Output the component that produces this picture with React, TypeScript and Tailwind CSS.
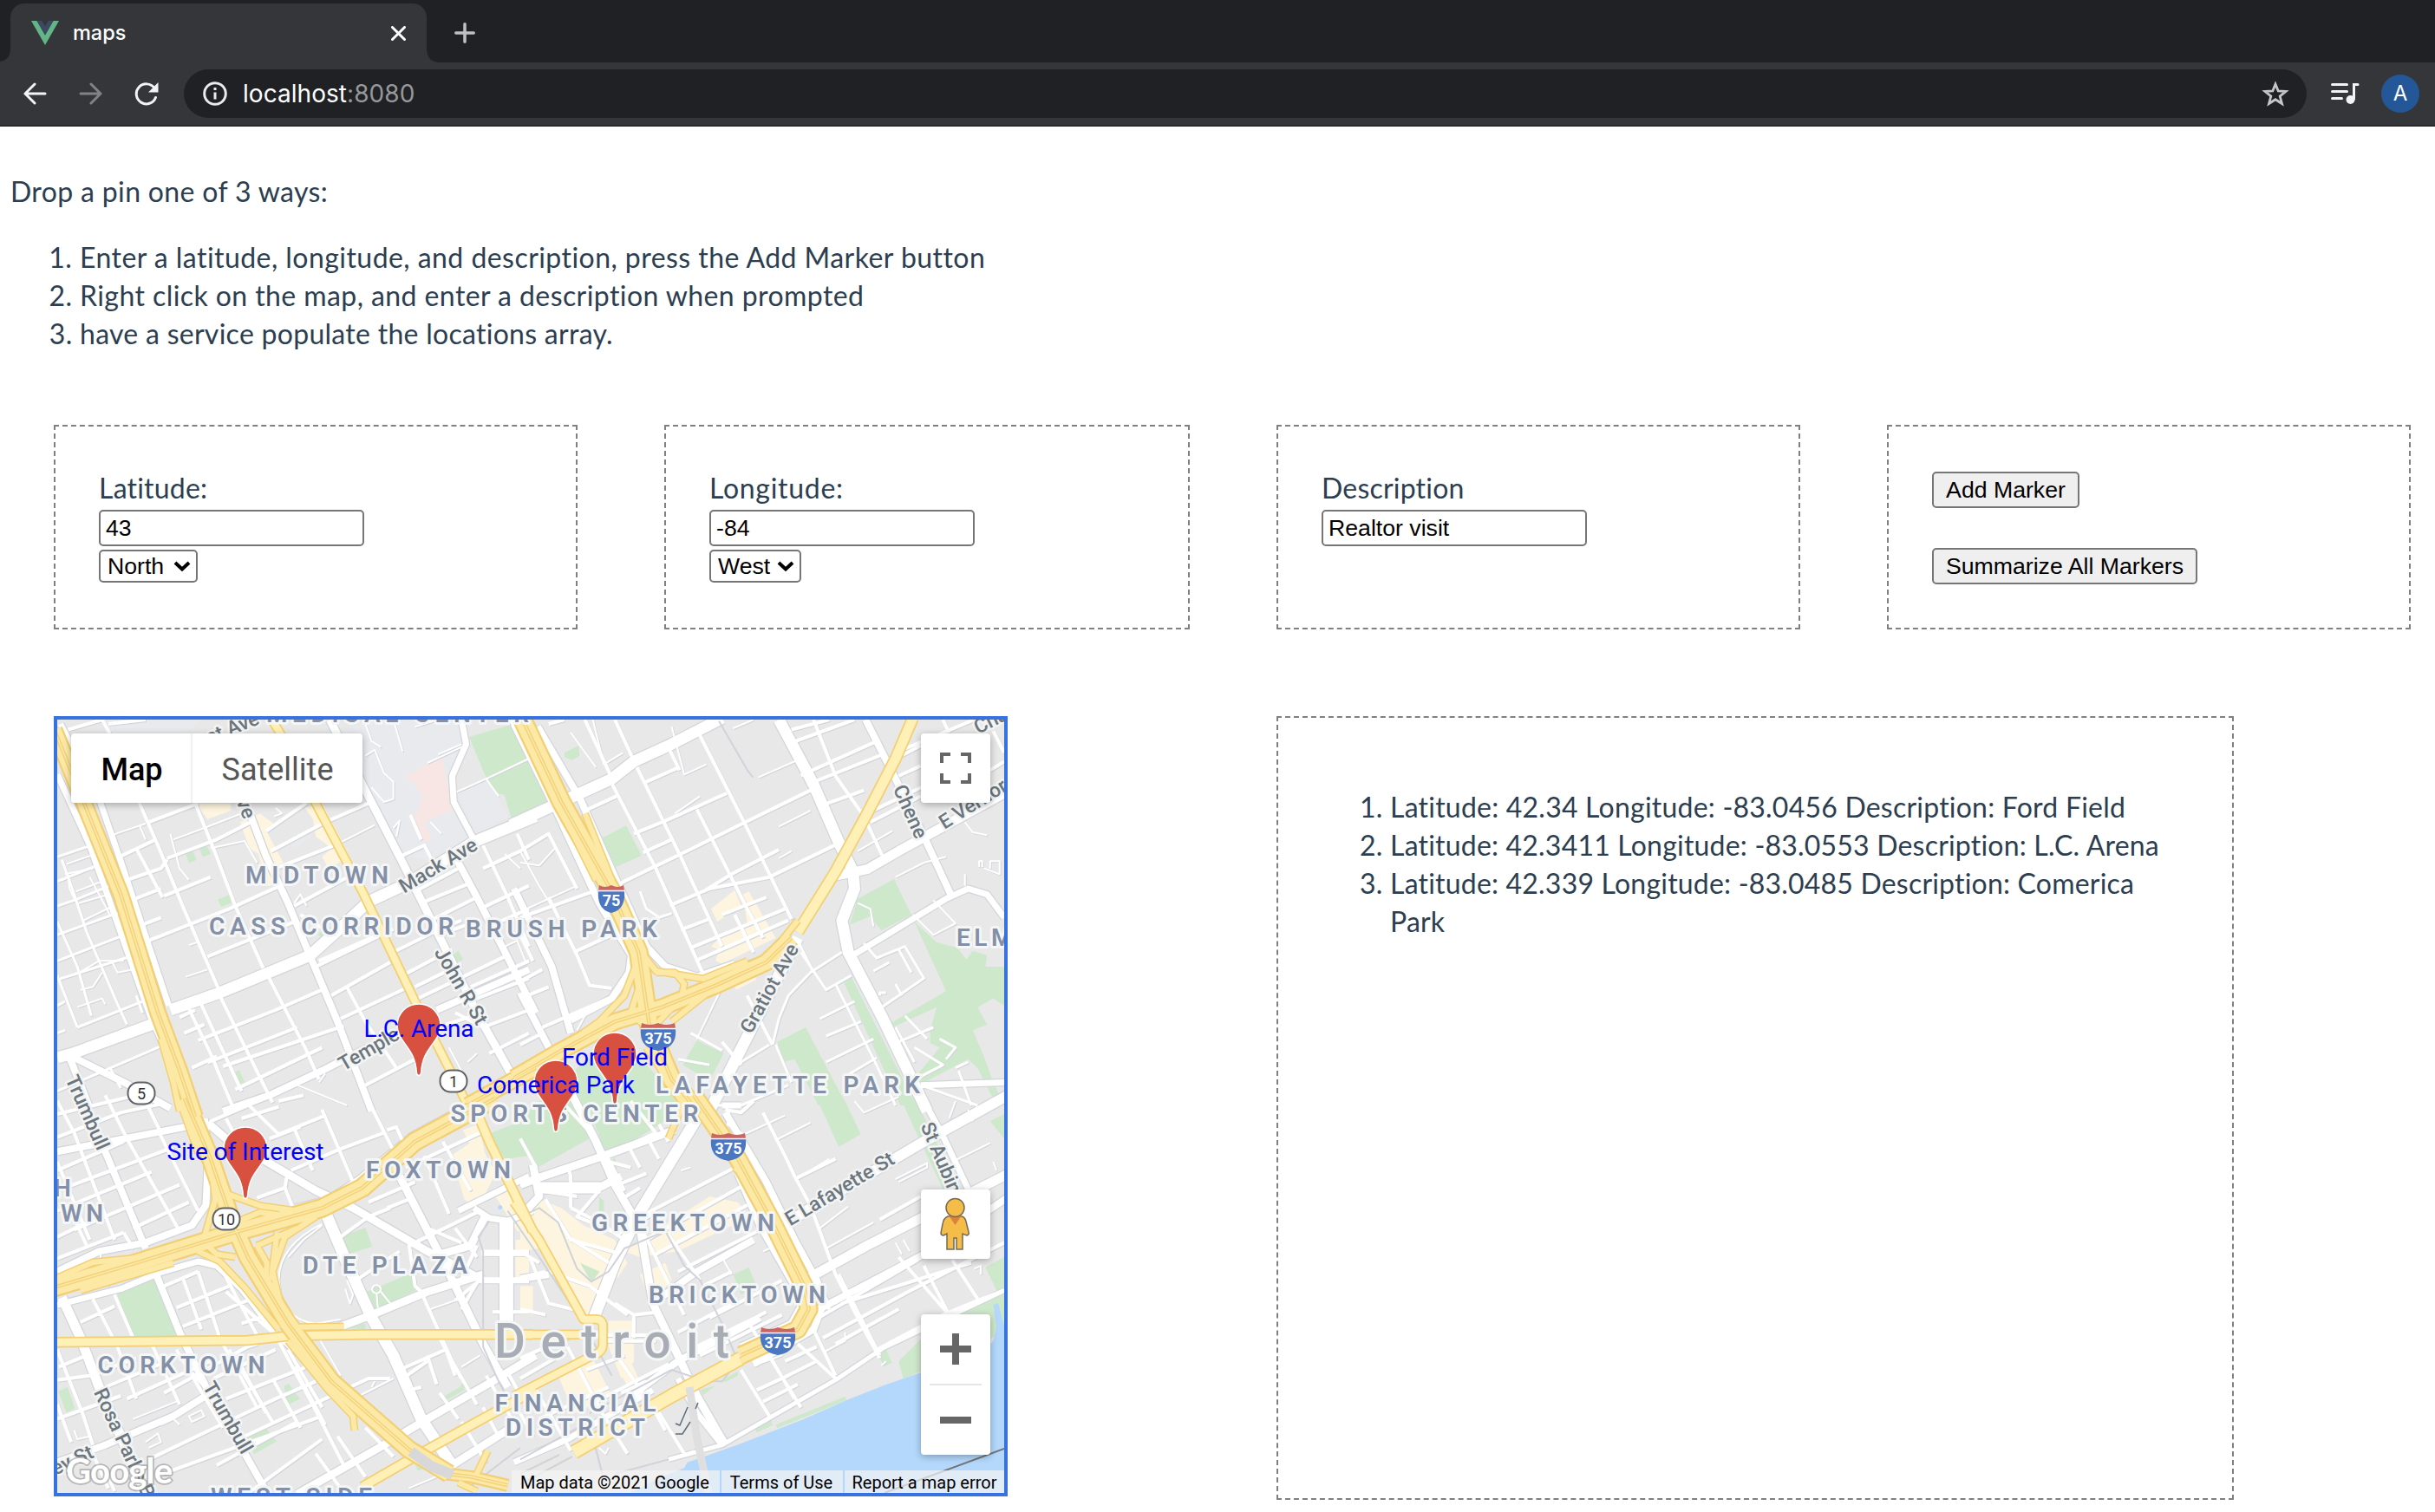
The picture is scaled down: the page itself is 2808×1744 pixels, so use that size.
import React from "react";

type Quad = "tl" | "tr" | "bl" | "br";
type Line = [Quad, number, string];
type Shape = [Quad, string];

const QUAD: Record<Quad, string> = {
  tl: "matrix(0.357143 0 0 0.333333 50 815)",
  tr: "matrix(0.363636 0 0 0.333333 600 815)",
  bl: "matrix(0.357143 0 0 0.333333 50 1270)",
  br: "matrix(0.363636 0 0 0.333333 600 1270)",
};

/* ---------- land use ---------- */
const CAMPUS: Shape[] = [
  ["tl", "M190 45H510L480 80L300 120L200 100Z"],
  ["tl", "M940 100L1060 45H1350L1370 130L1325 240L1330 340L1390 450L1240 530L1150 510L1040 280Z"],
  ["tl", "M1335 300L1440 250L1500 380L1400 440Z"],
  ["tl", "M790 465L855 420L870 445L805 495Z"],
  ["tl", "M960 520L1080 580L1070 650L1030 640Z"],
];
const PINK: Shape[] = [
  ["tl", "M1168 240L1285 178L1325 355L1232 400L1210 350L1225 310L1200 270Z"],
  ["tl", "M1190 380L1218 360L1254 460L1228 470Z"],
];
const RETAIL: Shape[] = [
  ["tl", "M495 335H605V360L530 390Z"],
  ["tl", "M635 400L700 370L750 410L720 430L775 540L740 560L735 620L720 620L695 510L665 490Z"],
  ["tl", "M845 350L900 335L990 520L920 560L900 520L930 490L880 450L870 390Z"],
  ["tr", "M605 700L680 635L700 690L625 745Z"],
  ["tr", "M705 650L725 640L810 800L640 890L620 880L630 840L605 830L650 780L720 750Z"],
  ["tr", "M675 960L740 925L748 945L685 980Z"],
  ["bl", "M1315 190L1400 130L1460 250L1400 380L1360 340Z"],
  ["bl", "M1355 100L1405 80L1430 200L1390 180Z"],
  ["bl", "M1460 330L1500 310L1568 420V460L1530 450Z"],
  ["bl", "M1525 480H1568V620H1525Z"],
  ["br", "M20 400L60 340L130 370L200 430L300 480L340 560L310 610L220 640L190 740L130 660L90 540Z"],
  ["br", "M330 520L600 330L690 350L730 400L500 520L380 540Z"],
  ["br", "M150 640L290 620L250 740L200 740Z"],
  ["br", "M380 600L460 560L480 620L430 680L400 660Z"],
  ["br", "M280 760H360V900L320 960L280 850Z"],
  ["br", "M120 950L230 890L290 1020L170 1080Z"],
  ["br", "M310 930L350 900L375 960L340 985Z"],
  ["br", "M0 640H40V740H0Z"],
  ["br", "M0 440L40 470L60 510L0 520Z"],
];
const PARK: Shape[] = [
  ["tl", "M1375 105L1512 62L1568 180V360L1512 390L1488 305L1462 300L1425 235Z"],
  ["tl", "M458 505L480 495L495 530L470 542Z"],
  ["tl", "M500 485L525 475L540 510L515 520Z"],
  ["tl", "M563 668L600 652L608 678L575 694Z"],
  ["tl", "M885 790L905 770V800Z"],
  ["tl", "M1320 860L1340 845L1355 875L1330 888Z"],
  ["tl", "M612 1268L632 1258L650 1300L630 1308Z"],
  ["tr", "M0 135H10L90 330L0 378Z"],
  ["tr", "M140 160L185 135L188 170L165 185L140 175Z"],
  ["tr", "M258 455L335 412L385 515L303 555Z"],
  ["tr", "M1070 665L1185 597L1240 720L1145 775L1110 725L1045 755Z"],
  ["tr", "M1250 745L1320 815L1385 835L1415 875L1435 845L1480 860L1475 900H1535V1035L1500 1010L1450 1040L1480 1100L1435 1120L1470 1210L1500 1300L1535 1380H1510L1450 1250L1420 1220L1265 1310L1240 1300L1330 1180L1300 1165V1120L1320 1040L1180 1110L1175 1095L1350 985Z"],
  ["tr", "M1020 940L1050 935L1255 1380H1205Z"],
  ["tr", "M815 1160L905 1110L1035 1380H945L870 1220L835 1230Z"],
  ["tr", "M560 1155L645 1200L600 1295L515 1240Z"],
  ["tr", "M170 1260L210 1220L290 1200L400 1240L520 1380H120Z"],
  ["bl", "M238 665L358 615L435 815L290 822Z"],
  ["bl", "M965 468L1040 438L1062 503L990 528Z"],
  ["bl", "M1038 662L1190 595L1212 650L1062 725Z"],
  ["bl", "M1435 115L1568 60V190L1490 200Z"],
  ["bl", "M48 1005L78 990L102 1065L74 1078Z"],
  ["bl", "M778 985L792 978L828 1030L785 1055Z"],
  ["bl", "M655 1150L712 1122L752 1178L680 1222Z"],
  ["bl", "M1280 1030L1345 990L1360 962V1000L1290 1042Z"],
  ["bl", "M970 785L1040 770V790Z"],
  ["bl", "M1180 1205L1280 1245L1210 1280Z"],
  ["br", "M0 60L60 0H195L232 122L52 232L0 130Z"],
  ["br", "M205 -10H470L500 40L400 110L272 185Z"],
  ["br", "M940 -10H1025L1080 115L1010 158Z"],
  ["br", "M1205 -10H1252L1390 305H1340Z"],
  ["br", "M1490 70L1535 45V130Z"],
  ["br", "M285 210L300 195L308 240Z"],
  ["br", "M250 330L265 345V385H250Z"],
  ["br", "M190 560L252 590L225 628Z"],
  ["br", "M675 600L725 575L748 640L700 670Z"],
  ["br", "M1475 575L1535 540V655H1510Z"],
  ["br", "M1330 760L1535 650V800L1215 962L1200 900Z"],
  ["br", "M1135 880L1160 860L1178 905L1155 918Z"],
  ["br", "M810 1120L1030 1022L1035 1035L815 1132Z"],
  ["br", "M745 1135L795 1102L800 1122L750 1147Z"],
  ["br", "M570 1000L618 985L580 1018Z"],
  ["br", "M640 965L690 935V950L650 972Z"],
];
const WATER: Shape[] = [
  ["br", "M330 1365L440 1305L520 1270L530 1250L590 1228L700 1185L900 1100L1035 1035L1150 985L1270 940L1480 850L1500 830L1510 780L1500 705L1515 700L1535 780V1365Z"],
  ["bl", "M1468 368a7 7 0 1 0 14 0a7 7 0 1 0 -14 0"],
];

/* ---------- streets ---------- */
const MINOR: Line[] = [
  // upper left
  ["tl", 3, "M45 520L150 482M45 605L185 545M45 690L100 670L215 620M45 790L245 712M45 880L262 790M45 945L300 858M45 1035L70 1020M110 1110L345 1010M45 1130L70 1120M60 530L100 650L140 780L240 1030L270 1100M45 745L110 900L155 1070M45 930L110 1110M45 1330L380 1175M215 1250L250 1320M300 1000L320 1060"],
  ["tl", 2, "M75 545L155 515M70 580L160 560M105 640L190 605M115 680L210 650M130 740L225 690M150 590L215 720M100 930L180 880L260 880M120 980L160 970L190 920M60 600L80 590L85 630L100 665M220 880L240 920L290 910M110 1040L190 1010L200 1030"],
  ["tl", 4, "M210 60L330 45M80 80L190 45M190 45L215 93M310 333L370 480L450 690L565 975M490 333L560 520L620 690L710 905M300 490L385 660M245 520L360 462M400 525L560 460L670 400M270 600L380 560L400 530M340 400L500 335M290 668L380 630M320 755L380 730M335 812L600 700L760 622M390 655L540 590M530 865L810 745M720 430L850 333M735 500L910 400L1060 330M750 560L940 480M810 690L1000 580M830 720L920 780"],
  ["tl", 2, "M420 460L520 420L640 370M410 440L440 560L470 600M310 410L330 460M460 935L530 910M470 825L500 815M540 490L650 465L690 540M220 445L330 405M960 470L1070 410M1000 540L1030 620M750 350L770 370L745 380M810 680L830 650L850 690"],
  ["tl", 4, "M500 1155L750 1050L900 980M530 1232L820 1110M580 1245L970 1105M620 1325L900 1180M470 1045L540 1200L610 1380M510 1030L640 1330M570 1000L680 1240L740 1370M715 910L850 1190L890 1290M980 970L1040 1090L1140 1250M880 900L1130 770M890 880L1080 790M930 1000L1120 885M960 1080L1170 975M1000 1200L1180 1110M1040 1310L1200 1220M440 1075L490 1050M455 1130L520 1100M480 1250L560 1210"],
  ["tl", 4, "M1130 850L1290 765L1350 740M1170 925L1320 840M1210 1010L1500 860M1200 970L1350 890M1380 970L1568 880M1400 1010L1568 940M1330 1060L1420 1110L1568 1050M1200 640L1340 560M1220 680L1380 610M1280 790L1380 750M1250 740L1400 660M1420 560L1540 500M1410 700L1568 620M1440 760L1568 700M1420 480L1500 660L1568 830M1530 440L1568 530M1440 1200L1568 1130M1300 1100L1420 1060M1150 520L1230 480L1260 540M1185 375L1220 460"],
  ["tl", 2, "M1040 60L1060 120L1090 140M1130 45L1160 155M1240 195L1350 140M1275 165L1350 130M1335 295L1440 245L1568 180M1430 250L1470 310M1040 170L1070 150L1100 230L1130 260V320L1100 330L1060 280M1130 420L1150 395L1140 450M1250 400L1285 440M1490 830L1530 810L1560 890M1200 70L1260 50M1490 510L1540 560M1370 1230L1400 1200M1310 1180L1350 1260M820 1310L980 1380M890 1300L910 1270"],
  // upper right
  ["tr", 4, "M290 265L430 560L580 925M370 210L505 510L640 830M465 130L505 220M565 90L710 400L860 735M560 355L720 700L770 800M205 45L285 235M300 45L355 175M90 60L140 45M320 610L410 562L510 510L710 402L920 290M360 440L450 400L655 300M390 505L480 460M390 265L500 212M475 688L600 630L790 590L1000 478M510 772L600 735M540 835L840 700M555 880L850 740M580 640L670 580L820 495M215 355L305 310M170 850L330 770M90 660L180 860L220 965L290 975"],
  ["tr", 4, "M860 125L1060 45M890 238L1140 115M910 270L1150 165M960 340L1090 290M930 45L1000 240L1090 380L1150 520M860 80L980 45M1090 375L1290 270M1110 400L1270 310M1200 155L1440 45M1190 180L1270 135M1200 240L1270 205M1340 45L1360 90M1500 85L1535 160M1490 220L1535 190M640 720L780 660M680 720L740 850M0 680L30 740L80 850L160 1130M0 790L40 880M0 950L70 910M0 1010L90 970M70 1110L280 1010M0 1170L70 1130M0 500L90 440L180 630M0 730L230 640M720 1000L800 1170M640 1160L700 1240"],
  ["tr", 2, "M0 500L60 620L100 690M0 540L60 550L110 490M20 700L180 620M755 245L890 180M675 75L740 45M820 415L920 360M820 525L860 500M480 70L520 235L590 200M1070 500L1180 430M1410 400L1435 435L1480 445M1190 590L1280 540L1350 520M1310 670L1380 750L1310 790L1245 720M1070 680L1110 700L1120 760M1455 555V535H1465V555M1490 560V535H1520V580L1470 560M1410 620V580M180 1120L215 1050M640 970L560 1150M230 45L265 200L325 160M160 90L240 210M570 310L490 370"],
  ["tr", 3, "M890 850L970 980L1050 930M1000 960L1130 1240L1190 1380M1090 820L1130 870L1220 830L1280 940L1140 1045M1120 915L1170 885M1200 840L1240 920M950 1080L1060 1020M970 1140L1080 1090M970 1230L1120 1150M1030 1280L1130 1215M1140 1000V990H1160M1190 960L1210 1000M1200 1160L1310 1110M1190 1110L1250 1230M1220 1070L1290 1150M1250 1180L1340 1240L1270 1280M1330 1150L1380 1180L1350 1220M1380 1250L1420 1230M1390 1260L1430 1380M800 1170L820 1080L850 1000L920 920L1020 850M810 1170L860 1300M700 1230L790 1170M540 1130L640 1190M380 640L400 700L440 730L480 715M500 1220L600 1240M880 810L930 920M620 1380L700 1380L850 1310M1270 1310L1450 1380"],
  // lower left
  ["bl", 4, "M45 45L300 -20M45 125L250 40L380 10M45 240L260 140M45 310L420 160M45 380L350 245M100 445L440 290M290 440L470 350M45 0L100 110L230 480M200 -20L280 150M330 0L380 110M270 130L440 450M370 100L500 380M45 470L180 400M45 545L260 455M80 360L140 500M45 210L150 480M260 455L290 510"],
  ["bl", 4, "M590 60L650 180M650 0L760 115L910 50M760 0L840 -20M810 95L870 240M900 30L1000 280M1050 0L1130 170M800 240L950 170L1100 110M690 335L780 300L790 240M780 300L810 380M540 70L760 -30M730 130L830 90M640 60L760 20M1110 100L1140 90L1170 160"],
  ["bl", 4, "M120 765L230 710M160 685L240 850L300 1030M230 670L290 820M390 640L500 590M430 715L600 640M450 780L660 690M640 770L710 745M500 590L570 820L690 1060M450 610L510 790M570 570L700 830M590 660L750 810L870 1050L970 1260M350 840L440 1050M50 920L140 880M45 965L150 950L300 890M200 990L400 900M270 1030L560 890M390 1010L660 850L690 840M45 1100L250 1020M45 860L130 1090L160 1190M45 1050L90 1180M550 960L750 860M590 1030L850 920M430 860L580 1130M600 860L740 1110M200 1270L230 1350M160 1220L210 1340"],
  ["bl", 4, "M340 1240L750 1030L880 970M360 1300L900 1090M650 1160L1050 960L1120 960M560 1260L820 1110M670 1350L900 1170M880 1220L960 1340M950 1160L1040 1300M740 960L830 1130M810 920L910 1120M1040 1130L1130 1230M790 860L900 1060M640 920L720 1080M480 940L540 1010"],
  ["bl", 2, "M290 1100L430 1040M100 1140L110 1170L150 1160M330 1180L370 1150L380 1180L340 1200M470 1090L510 1070L520 1090L480 1110ZM380 1120L420 1100L440 1120M1020 1020L1130 960M890 820L960 950M1060 990L1070 970M1250 720L1330 690M1350 920L1410 880M1180 1340L1290 1290M790 540L840 480L900 430M185 510V580L210 640M975 650L990 700L1000 670L980 620M1075 665a14 14 0 1 1 1 0L1080 715M1090 660L1120 700M900 425Q760 500 760 620Q770 760 880 770L960 755"],
  ["bl", 4, "M1150 930L1300 860M1160 960L1240 900M1180 1000L1220 990M1220 660L1320 900L1400 1050M1240 880L1270 980M1300 860L1330 950M1280 820L1350 960M1330 690L1410 620M1350 720L1410 610M1340 640L1400 500M960 470L1050 400L1120 370M1180 490L1200 640L1220 660M1010 620L1150 520M1050 350L1200 280M1200 490L1410 380M1240 440L1350 490M1110 370L1180 340M1330 440L1400 540M1350 1110L1430 1250M1420 1060L1470 1160M1280 1010L1340 1100M1430 950L1530 1130M1500 940L1568 1070M1330 1250L1500 1130M1420 530H1568M1450 730H1568M1290 140L1380 310M1230 190L1310 390M1170 230L1430 100"],
  ["bl", 7, "M1415 525H1568M1420 620H1568"],
  // lower right
  ["br", 4, "M0 290L60 270M50 230L0 130M150 220L160 260V370M60 310L180 330M270 190L430 110M280 210L350 230M310 290L400 250M320 340L380 300M340 150L380 230M400 120L440 200M440 80L470 140M350 0L430 110M130 0L240 130M250 310L180 400L310 460L420 390M160 370L250 420L330 480M380 400L680 230M400 480L710 290M430 530L720 360M500 590L770 440M80 340L160 480L320 530M0 520L60 560M0 610L80 590M30 540L90 700L200 730M90 590L220 640L290 700L340 740M150 470L280 560M270 180L330 310"],
  ["br", 4, "M380 430L520 740M470 460L570 620M360 740V820M300 700L360 740L440 730M430 690L540 600M580 640L670 590M600 750L830 620M500 800L690 690M540 860L780 730M570 880L830 740M720 760L890 1060M790 880L870 1030M830 960L940 900M750 1000L850 950M770 1040L880 980M700 930L790 1090M880 840L1000 960M930 790L1000 950M270 810H430M270 830H430M0 720L80 740M0 890L190 800M150 850L260 1080L340 1220M210 930L330 880M240 1040L470 910M60 1100L280 990M300 870L420 1060L460 1140M430 1060L520 1220M50 1000L160 1210M0 1080L40 1160M0 960L110 890M320 1010L400 970M290 1110L370 1080"],
  ["br", 4, "M650 30L700 40L740 0M660 40V80L710 120M770 40L840 190L870 260L920 360L1000 600L1080 770L1140 890M870 270L1000 200M1010 600L1140 880M1200 540L1360 740M1280 570L1370 760M1370 550L1460 700M960 820L1230 660L1535 490M1000 840L1200 720M1130 860L1340 740L1450 690L1535 655M930 760L1260 550M840 900L940 850M1020 700L1430 560M1140 410L1270 330M920 620L980 720"],
  ["br", 2, "M700 120L840 50M810 135L920 75M870 275L980 200M950 440L1040 365M970 510L1120 420M1190 270L1290 215V230L1200 280M1360 60L1380 0M1420 30L1435 70M1370 210L1490 145M1500 210L1510 240M640 540L670 600M510 240L540 230M1190 490L1210 530M1215 480L1235 520M1060 0L1090 40L1200 -15M770 520L790 510M740 915L830 880M1030 800V830L960 870M1145 915L1160 900M250 1200L270 1220L280 1200M470 1240L550 1210M1440 580L1460 570V600"],
];
const MID: Line[] = [
  ["tl", 8, "M670 380L720 520L790 680L860 860L950 1090L1060 1400"],
  ["tl", 9, "M925 45L1040 290L1160 540L1290 820L1400 1060L1520 1290"],
  ["tl", 8, "M1330 520L1400 660L1500 870L1590 1060M1515 45L1590 210"],
  ["tl", 7, "M1350 45L1365 130L1320 240L1325 330L1395 470"],
  ["tl", 8, "M580 1400L730 1345L900 1260L1000 1205L1190 1110M1270 1050L1568 910"],
  ["tl", 8, "M85 1215L150 1390M100 1215L260 1300L410 1390"],
  ["tl", 7, "M55 60L180 320L245 520L405 1035M45 235L150 480L345 1070L385 1165"],
  ["tr", 8, "M-20 60L110 350L250 680L352 860L345 920L290 1010L160 1085M55 70L190 320L300 590L400 830L460 900L560 935L680 890M-20 630L100 900L160 1130M0 990L100 1200"],
  ["tr", 8, "M1095 45L1190 250L1280 450L1365 650"],
  ["tr", 7, "M1040 870L1350 665L1420 630L1480 650L1535 730"],
  ["tr", 7, "M690 900L860 850M1270 1310L1550 1300M640 1380L700 1380"],
  ["bl", 8, "M120 -20L190 150L330 510M355 575L440 800L530 1000L640 1200L730 1370"],
  ["bl", 8, "M520 60L532 200L525 360L480 430L330 490L180 520L45 590"],
  ["bl", 7, "M45 705L250 650L380 592L500 555L560 570L640 650L750 805L960 1000L1140 1150"],
  ["bl", 8, "M45 1250L200 1190L420 1090L540 1010M45 175L480 85"],
  ["bl", 9, "M530 75L590 130L730 215L880 310L1000 370L1240 520L1420 620"],
  ["bl", 9, "M1150 260L1270 510L1330 640L1420 840L1500 990M960 780L1060 740L1240 660L1420 600"],
  ["bl", 7, "M810 370L920 340L1020 270L1190 120L1380 10M1390 370L1440 405L1500 415L1580 380M1340 380L1568 260"],
  ["bl", 9, "M820 1360L1100 1190L1240 1100L1450 970L1590 880M1320 1260L1540 1110M1430 390L1380 500L1250 540"],
  ["br", 9, "M160 -30L240 140L300 290L380 440L420 700L500 880L560 1020L650 1190"],
  ["br", 9, "M0 290L60 265L250 195L490 100M45 300H250L320 260M40 220L60 330L0 400"],
  ["br", 8, "M690 250L760 430L870 640L895 700L860 770L700 850M650 40L780 280L870 480L940 620L965 690L930 790L740 910"],
  ["br", 8, "M420 700L560 590L740 480M740 870L930 730L1280 530L1550 330M0 615L90 600"],
  ["br", 5, "M470 1240L640 1190L1000 965L1150 855L1535 655"],
  ["br", 7, "M1270 -20L1340 120L1440 350M-20 1250L150 1170L420 1000M500 960L560 1080L640 1190"],
  ["br", 8, "M340 1030L500 900L640 820L760 750"],
];
const MAJOR: Line[] = [
  ["tl", 13, "M45 1215L95 1200L350 1100M410 1050L570 990L860 862L950 775L1050 675L1180 610L1390 468L1590 380"],
  ["tr", 13, "M-30 410L110 340L190 300L290 250L360 190L480 130L640 40"],
  ["tr", 13, "M820 45L930 270L1010 470L1055 570L1060 630L1020 740L1040 850L1150 1080L1290 1400"],
  ["tr", 11, "M1000 585L1100 563L1200 500L1560 285"],
  ["tr", 13, "M880 800L590 1420"],
  ["bl", 11, "M60 680L120 820L180 990L340 1380"],
  ["bl", 13, "M915 395L980 560L1060 750L1130 880L1220 1100L1320 1260"],
  ["bl", 16, "M1495 420V790"],
  ["br", 13, "M560 60L370 400L300 560L230 760"],
  ["br", 12, "M830 430L1280 140L1580 -40"],
  ["br", 11, "M910 615L1100 500L1550 250"],
  ["br", 13, "M50 300H255"],
];
const ARTERIAL: Line[] = [
  ["tl", 8, "M735 40L780 120M875 325L1030 640L1200 1020L1380 1400"],
  ["tr", 11, "M1245 40L1190 180L1100 370L1000 570L880 780"],
  ["bl", 9, "M40 835L660 828L800 812L1040 808L1580 808"],
  ["bl", 9, "M1030 1335L1200 1230L1400 1110L1590 1000M1380 -10L1440 140L1580 450"],
  ["br", 8, "M-20 350L60 480L200 755H240Q262 755 262 780V840Q262 870 230 880L-20 1020M-10 808H210"],
  ["br", 14, "M170 1215L480 1020L700 890"],
];
const RAMP: Line[] = [
  ["tr", 7, "M140 380L240 600M205 370L290 600M370 830L430 915L580 942L720 880M365 900L330 1000L250 1090L120 1190M430 920L490 920L520 960L510 1010L430 1100M380 960L350 1060L400 1110M260 1120L420 1040L520 1010M480 1090L640 950M800 850L880 740M400 1180L520 1380"],
  ["bl", 7, "M45 612L160 558L330 540M590 320L700 362L830 382M530 500L560 530L620 540M480 510L570 555L650 645L760 790M520 470L555 340L540 200M755 455L735 620M690 500L722 560L718 620M880 400L780 470L740 590L765 700L820 782L970 780M620 420L700 385L800 400M690 500L820 440M790 830L920 1000L1000 1090L1005 1140M440 0L500 180M120 655L230 620L420 560M1395 1300L1435 1210M1340 1320L1400 1350"],
  ["tl", 7, "M380 1150L420 1300L440 1400"],
  ["br", 7, "M520 0L470 130M680 230L760 300M700 900L800 840"],
];
const HIGHWAY: Line[] = [
  ["tl", 17, "M35 80L130 330L250 650L370 1060L440 1260L490 1420"],
  ["tl", 17, "M1370 1380L1590 1250"],
  ["tr", 20, "M5 40L130 330L290 640L375 850L410 1110L480 1290L570 1410"],
  ["tr", 18, "M-20 1285L130 1190L300 1090L450 1040L620 965L780 885L860 800"],
  ["bl", 19, "M455 -10L540 200L610 420L660 540L790 770L930 970L1180 1205L1310 1290"],
  ["bl", 20, "M35 645L300 560L600 460L900 370L1030 300L1200 140L1460 -10"],
  ["bl", 12, "M1300 1290L1380 1300L1500 1330"],
  ["br", 19, "M550 -20L690 200L800 420L900 640L915 720L880 790L700 880"],
];
const RAIL: Line[] = [
  ["tr", 2, "M630 50L720 220L738 245"],
  ["bl", 2, "M1440 415L1405 470L1420 520V850L1470 970L1510 1050M1370 1340L1540 1200"],
  ["br", 2, "M-40 380L60 540L200 770L290 950M0 400L60 370L120 420L180 580L225 625L280 590L330 510L460 450L520 570L570 620L640 770L690 900L640 970H590L480 930L360 1000L220 1080M220 1120L260 1290M0 1240L200 1120M300 1290L470 1240"],
];

function Areas({ items, fill }: { items: Shape[]; fill: string }) {
  return (
    <g fill={fill}>
      {items.map(([q, d], i) => (
        <path key={i} transform={QUAD[q]} d={d} />
      ))}
    </g>
  );
}

function Roads({ items, color, grow = 0, shift = 0 }: { items: Line[]; color: string; grow?: number; shift?: number }) {
  return (
    <g fill="none" stroke={color} strokeLinejoin="round" transform={`translate(${shift} ${shift})`}>
      {items.map(([q, w, d], i) => (
        <path key={i} transform={QUAD[q]} d={d} strokeWidth={Math.max(1, w + grow)} vectorEffect="non-scaling-stroke" />
      ))}
    </g>
  );
}

const AREAS: [string, number, number, number][] = [
  ["MEDICAL CENTER", 308, 833, 303],
  ["MIDTOWN", 284, 1018.5, 165],
  ["CASS CORRIDOR", 242, 1077.5, 282],
  ["BRUSH PARK", 538, 1080.5, 221],
  ["LAFAYETTE PARK", 757, 1260.5, 305],
  ["SPORTS CENTER", 520.5, 1294, 286],
  ["FOXTOWN", 423, 1358.5, 167],
  ["WN", 71, 1408.5, 49],
  ["DTE PLAZA", 350, 1469, 190],
  ["GREEKTOWN", 683, 1419.5, 211],
  ["BRICKTOWN", 749, 1502.5, 204],
  ["CORKTOWN", 113.5, 1584, 193],
  ["FINANCIAL", 571.5, 1627.5, 186],
  ["DISTRICT", 584, 1655.5, 161],
  ["WEST SIDE", 244, 1736, 186],
];

/* label, centre x, centre y, angle, font size */
const STREETS: [string, number, number, number, number][] = [
  ["st Ave", 268, 839, -22, 23],
  ["ve", 284, 932, 68, 23],
  ["Mack Ave", 505, 998, -31, 23],
  ["John R St", 532, 1137, 60, 23],
  ["Temple St", 437, 1203, -30, 23],
  ["Trumbull", 101, 1283, 66, 23],
  ["Trumbull", 263, 1635, 60, 23],
  ["Rosa Parks Bl", 145, 1667, 65, 23],
  ["ey St", 83, 1684, -25, 23],
  ["Chene", 1050, 936, 66, 23],
  ["Gratiot Ave", 887, 1140, -61, 23],
  ["St Aubin St", 1091, 1348, 67, 23],
  ["E Lafayette St", 968, 1371, -31, 23],
];

const PINS: [string, number, number, number][] = [
  ["L.C. Arena", 483, 1158, 127],
  ["Ford Field", 709, 1191, 122],
  ["Comerica Park", 641, 1223, 182],
  ["Site of Interest", 283, 1300, 181],
];

function Interstate({ x, y, n }: { x: number; y: number; n: string }) {
  const w = n.length > 2 ? 20 : 15;
  return (
    <g transform={`translate(${x} ${y})`}>
      <path d={`M${-w} -9C${-w - 1} 2 ${-w + 2} 13 0 16C${w - 2} 13 ${w + 1} 2 ${w} -9Z`} fill="#4b77c2" />
      <path d={`M${-w + 1} -16Q${-w / 2} -12 0 -16Q${w / 2} -12 ${w - 1} -16L${w} -10H${-w}Z`} fill="#cb6560" />
      <path d={`M${-w} -9.5H${w}`} stroke="#fff" strokeWidth="1.6" />
      <text x="0" y="7.5" textAnchor="middle" fontSize="18" fontWeight="700" fill="#fff">{n}</text>
    </g>
  );
}

function StateRoute({ x, y, n }: { x: number; y: number; n: string }) {
  return (
    <g transform={`translate(${x} ${y})`}>
      <rect x="-15.5" y="-12.5" width="31" height="25" rx="12" fill="#fff" stroke="#5f6368" strokeWidth="2" />
      <text x="0" y="6.5" textAnchor="middle" fontSize="18" fill="#333">{n}</text>
    </g>
  );
}

function MapCanvas() {
  return (
    <svg viewBox="66 830 1092 892" className="block h-full w-full" fontFamily="Roboto, sans-serif">
      <rect x="66" y="830" width="1092" height="892" fill="#e8e8e8" />
      <Areas items={CAMPUS} fill="#e8eaee" />
      <Areas items={PINK} fill="#f8e6e4" />
      <Areas items={RETAIL} fill="#fdf5df" />
      <Areas items={PARK} fill="#cee8cb" />
      <Areas items={WATER} fill="#b3d8fb" />
      <Roads items={MINOR} color="#d3d5da" shift={1} />
      <Roads items={MID} color="#d3d5da" grow={2.5} />
      <Roads items={MAJOR} color="#d3d5da" grow={2.5} />
      <Roads items={MINOR} color="#ffffff" />
      <Roads items={MID} color="#ffffff" />
      <Roads items={MAJOR} color="#ffffff" />
      <Roads items={RAIL} color="#d0d3d9" />
      <Roads items={ARTERIAL} color="#f4cf72" grow={3.5} />
      <Roads items={ARTERIAL} color="#fef0b6" />
      <Roads items={RAMP} color="#f3cf74" grow={2} />
      <Roads items={HIGHWAY} color="#f3cf74" grow={3} />
      <Roads items={RAMP} color="#fde9a6" grow={-1} />
      <Roads items={HIGHWAY} color="#fde9a6" grow={-1.5} />
      <Roads items={HIGHWAY.map(([q, , d]) => [q, 4.5, d] as Line)} color="#f3d27c" />
      <Roads items={HIGHWAY.map(([q, , d]) => [q, 1.5, d] as Line)} color="#fde9a6" />
      <g fill="none">
        <path d="M474 1674L497 1691L522 1701" stroke="#d8d8da" strokeWidth="12" />
        <path d="M795 1600L804 1660L817 1722" stroke="#dfdfdf" strokeWidth="9" />
        <path d="M600 1712L660 1680M600 1700L645 1678" stroke="#d3d3d3" strokeWidth="2" />
        <path d="M779 1642L784 1644L793 1623M779 1654L787 1654L796 1640M802 1625L805 1618" stroke="#5b6b7d" strokeWidth="1.5" />
        <path d="M1020 1722L1158 1671" stroke="#757575" strokeWidth="2" />
      </g>

      <g fontSize="23" fontWeight="500" fill="#6c767e" stroke="#f3f4f4" strokeWidth="5" strokeLinejoin="round" paintOrder="stroke">
        {STREETS.map(([t, x, y, a, s], i) => (
          <text key={i} transform={`translate(${x} ${y}) rotate(${a})`} y="8" textAnchor="middle" fontSize={s}>{t}</text>
        ))}
        <text transform="translate(1089 957) rotate(-32)">E Vernor H</text>
        <text transform="translate(1128 847) rotate(-27)">Cha</text>
      </g>
      <g fontSize="28" fontWeight="600" fill="#8390a7" stroke="#f5f6f6" strokeWidth="6" strokeLinejoin="round" paintOrder="stroke">
        {AREAS.map(([t, x, y, w], i) => (
          <text key={i} x={x - 1} y={y} textLength={w}>{t}</text>
        ))}
        <text x="62" y="1380">H</text>
        <text x="1103" y="1090.5" letterSpacing="4.5">ELM</text>
      </g>
      <text x="570" y="1566" fontSize="55" fontWeight="500" fill="#a7acb5" stroke="#f5f6f6" strokeWidth="6" strokeLinejoin="round" paintOrder="stroke" textLength="271">Detroit</text>

      <Interstate x={705} y={1037} n="75" />
      <Interstate x={759} y={1196} n="375" />
      <Interstate x={840} y={1323} n="375" />
      <Interstate x={897} y={1547} n="375" />
      <StateRoute x={163} y={1261} n="5" />
      <StateRoute x={523} y={1247} n="1" />
      <StateRoute x={261} y={1406} n="10" />

      {PINS.map(([t, x, y]) => (
        <path key={t} transform={`translate(${x} ${y})`} d="M0 0C14 0 25 11 25 25C25 33 21 39 16 46C8 57 4 63 2.600 79C2.400 81.500 1.500 82.500 0 82.500S-2.400 81.500 -2.600 79C-4 63 -8 57 -16 46C-21 39 -25 33 -25 25C-25 11 -14 0 0 0Z" fill="#d85040" stroke="#fff" strokeWidth="1.5" />
      ))}
      {PINS.map(([t, x, y, w]) => (
        <text key={t} x={x - w / 2} y={y + 38} fontSize="28" fill="#0000ff" textLength={w}>{t}</text>
      ))}
      <g fontFamily="Lato, sans-serif" fontSize="40" fontWeight="700">
        <text x="76" y="1711" fill="#fff" stroke="#8a8a8a" strokeOpacity="0.55" strokeWidth="3.5" paintOrder="stroke" textLength="123">Google</text>
      </g>
    </svg>
  );
}

function ZoomButtons() {
  return (
    <div className="flex h-[162px] w-20 flex-col items-center rounded bg-white shadow-[0_2px_8px_rgba(0,0,0,0.3)]">
      <button className="flex h-20 w-20 items-center justify-center">
        <svg width="36" height="36" viewBox="0 0 36 36" fill="#666"><path d="M14 0h8v14h14v8H22v14h-8V22H0v-8h14z" /></svg>
      </button>
      <div className="h-0.5 w-[60px] bg-[#e6e6e6]" />
      <button className="flex h-20 w-20 items-center justify-center">
        <svg width="36" height="8" viewBox="0 0 36 8" fill="#666"><path d="M0 0h36v8H0z" /></svg>
      </button>
    </div>
  );
}

function MapPanel() {
  return (
    <div className="relative h-[900px] w-[1100px] overflow-hidden border-4 border-[#3871e0] font-[Roboto,sans-serif]">
      <MapCanvas />
      <div className="absolute left-4 top-4 flex h-20 rounded bg-white text-[36px] leading-none shadow-[0_2px_8px_rgba(0,0,0,0.3)]">
        <button className="w-[140px] border-r-2 border-[#f0f0f0] pl-0.5 pt-1 font-medium text-black">Map</button>
        <button className="w-[196px] pt-1 text-[#565656]">Satellite</button>
      </div>
      <button className="absolute right-4 top-4 flex h-20 w-20 items-center justify-center rounded bg-white shadow-[0_2px_8px_rgba(0,0,0,0.3)]">
        <svg width="36" height="36" viewBox="0 0 36 36" fill="#666">
          <path d="M0 0h12v4H4v8H0zM24 0h12v12h-4V4h-8zM0 24h4v8h8v4H0zM32 24h4v12H24v-4h8z" />
        </svg>
      </button>
      <div className="absolute right-4 top-[542px] flex flex-col gap-16">
        <button className="flex h-20 w-20 items-center justify-center rounded bg-white shadow-[0_2px_8px_rgba(0,0,0,0.3)]">
          <svg width="36" height="62" viewBox="0 0 36 62">
            <path d="M9 22Q4 24 3 31L1 41Q1 44 4 44L8 42V60H16V47H19V60H26V42L31 44Q34 43 33 40L30 28Q29 23 25 22Z" fill="#f5bd48" stroke="#746a58" strokeWidth="1.500" />
            <path d="M10 21H25L17.500 32Z" fill="#d8843c" />
            <circle cx="17.500" cy="12" r="10.500" fill="#f5bd48" stroke="#746a58" strokeWidth="1.500" />
          </svg>
        </button>
        <ZoomButtons />
      </div>
      <div className="absolute bottom-0 right-0 flex h-[26px] gap-0.5 whitespace-nowrap text-[20px] leading-[28px] text-black">
        <span className="w-[240px] bg-[#f5f5f5]/70 pl-2.5">Map data ©2021 Google</span>
        <span className="w-[140px] bg-[#f5f5f5]/70 pr-0.5 text-center">Terms of Use</span>
        <span className="w-[184px] bg-[#f5f5f5]/70 text-center">Report a map error</span>
      </div>
    </div>
  );
}

function Browser() {
  return (
    <header className="h-[146px] border-b-2 border-[#28292b] bg-[#35363a] font-[Inter,sans-serif]">
      <div className="flex h-[72px] items-end bg-[#202124]">
        <svg width="12" height="16" viewBox="0 0 12 16"><path d="M12 0V16H0V15Q12 13 12 0Z" fill="#35363a" /></svg>
        <div className="flex h-[68px] w-[480px] items-center rounded-t-2xl bg-[#35363a] pl-6 pr-6">
          <svg width="32" height="28" viewBox="0 0 32 28">
            <path d="M0 0H6.500L16 16.500L25.500 0H32L16 28Z" fill="#63b587" />
            <path d="M6.500 0H12.300L16 6.500L19.700 0H25.500L16 16.500Z" fill="#3b4a61" />
          </svg>
          <span className="ml-4 flex-1 text-[23.5px] font-medium text-white">maps</span>
          <svg width="17" height="17" viewBox="0 0 17 17" stroke="#fff" strokeWidth="3" strokeLinecap="round"><path d="M1.500 1.500L15.500 15.500M15.500 1.500L1.500 15.500" /></svg>
        </div>
        <svg width="16" height="16" viewBox="0 0 16 16"><path d="M0 0V16H16Q0 16 0 0Z" fill="#35363a" /></svg>
        <svg className="mb-[22px] ml-4" width="24" height="24" viewBox="0 0 24 24" stroke="#bdc1c6" strokeWidth="3.500" strokeLinecap="round"><path d="M12 1.800V22.200M1.800 12H22.200" /></svg>
      </div>
      <div className="flex h-[72px] items-center pl-[27px] pr-[18px]">
        <svg width="27" height="26" viewBox="0 0 27 26" fill="none" stroke="#f1f3f4" strokeWidth="3" strokeLinecap="round"><path d="M13 2L2 13L13 24M2 13H25" /></svg>
        <svg className="ml-[37px]" width="27" height="26" viewBox="0 0 27 26" fill="none" stroke="#818286" strokeWidth="3" strokeLinecap="round"><path d="M14 2L25 13L14 24M25 13H2" /></svg>
        <svg className="ml-[37px]" width="28" height="27" viewBox="0 0 28 27">
          <path d="M23 6.500A11.500 11.500 0 1 0 24.500 17.500" fill="none" stroke="#f1f3f4" strokeWidth="3" strokeLinecap="round" />
          <path d="M27.500 0V11.500H16Z" fill="#f1f3f4" />
        </svg>
        <div className="ml-[29px] flex h-14 flex-1 items-center rounded-full bg-[#202124] pl-[22px] pr-5 text-[28px]">
          <svg width="28" height="28" viewBox="0 0 28 28" fill="none" stroke="#e8eaed" strokeWidth="3"><circle cx="14" cy="14" r="12.300" /><path d="M14 12.500V20.500M14 7V10" /></svg>
          <span className="ml-[18px] flex-1 tracking-[0.05px] text-white">localhost<span className="text-[#96989b]">:8080</span></span>
          <svg width="32" height="30" viewBox="0 0 32 30" fill="none" stroke="#c4c7c5" strokeWidth="2.800"><path d="M16 4L19.200 12L28 12.400L21.200 18L23.500 26.500L16 21.700L8.500 26.500L10.800 18L4 12.400L12.800 12Z" /></svg>
        </div>
        <svg className="ml-7" width="33" height="26" viewBox="0 0 33 26">
          <path d="M1.500 2.500H18.500M1.500 10.500H18.500M1.500 18.500H12.500M26.500 19V2.500H31" fill="none" stroke="#f1f3f4" strokeWidth="3" strokeLinecap="round" />
          <circle cx="22.500" cy="20" r="5" fill="#f1f3f4" />
        </svg>
        <div className="ml-[25px] flex h-11 w-11 items-center justify-center rounded-full bg-[#235797] text-[24px] text-white">A</div>
      </div>
    </header>
  );
}

function Box({ children }: { children: React.ReactNode }) {
  return <div className="h-[236px] border-2 border-dashed border-[#808080] px-[50px] pt-[50px]">{children}</div>;
}

function Field({ value }: { value: string }) {
  return (
    <input
      defaultValue={value}
      className="block h-[42px] w-[306px] rounded-[5px] border-2 border-[#767676] bg-white px-1.5 font-['Liberation_Sans',sans-serif] text-[26.67px] text-black"
    />
  );
}

function Choice({ value, width }: { value: string; width: string }) {
  return (
    <div className={`mt-1 flex h-[38px] items-center justify-between rounded-[5px] border-2 border-[#767676] bg-white pl-2 pr-1.5 font-['Liberation_Sans',sans-serif] text-[26.67px] leading-none text-black ${width}`}>
      <span>{value}</span>
      <svg width="20" height="12" viewBox="0 0 20 12" fill="none" stroke="#000" strokeWidth="4"><path d="M2 2L10 9.500L18 2" /></svg>
    </div>
  );
}

function Action({ label, width }: { label: string; width: string }) {
  return (
    <button className={`block h-[42px] rounded-[5px] border-2 border-[#767676] bg-[#efefef] text-center font-['Liberation_Sans',sans-serif] text-[26.67px] leading-none text-black ${width}`}>
      {label}
    </button>
  );
}

export default function App() {
  return (
    <div className="h-[1744px] w-[2808px] overflow-hidden bg-white font-[Lato,sans-serif] text-[32px] leading-[44px] text-[#2c3e50]">
      <Browser />
      <p className="mt-[53px] pl-3 tracking-[0.35px]">Drop a pin one of 3 ways:</p>
      <ol className="mt-8 list-decimal pl-[92px]">
        <li className="tracking-[0.45px]">Enter a latitude, longitude, and description, press the Add Marker button</li>
        <li className="tracking-[0.42px]">Right click on the map, and enter a description when prompted</li>
        <li className="tracking-[0.28px]">have a service populate the locations array.</li>
      </ol>
      <div className="mt-[83px] grid grid-cols-[604px_606px_604px_604px] gap-[100px] pl-[62px]">
        <Box>
          <div className="-mt-px h-[47px] tracking-[0.2px]">Latitude:</div>
          <Field value="43" />
          <Choice value="North" width="w-[114px]" />
        </Box>
        <Box>
          <div className="-mt-px h-[47px] tracking-[0.7px]">Longitude:</div>
          <Field value="-84" />
          <Choice value="West" width="w-[106px]" />
        </Box>
        <Box>
          <div className="-mt-px h-[47px] tracking-[0.2px]">Description</div>
          <Field value="Realtor visit" />
        </Box>
        <Box>
          <div className="flex flex-col gap-[46px] pt-0.5">
            <Action label="Add Marker" width="w-[170px]" />
            <Action label="Summarize All Markers" width="w-[306px]" />
          </div>
        </Box>
      </div>
      <div className="mt-[100px] flex pl-[62px]">
        <MapPanel />
        <div className="ml-[310px] h-[904px] w-[1104px] border-2 border-dashed border-[#808080] px-[50px] pt-[81px]">
          <ol className="list-decimal pl-[79px]">
            <li className="tracking-[0.22px]">Latitude: 42.34 Longitude: -83.0456 Description: Ford Field</li>
            <li className="tracking-[0.2px]">Latitude: 42.3411 Longitude: -83.0553 Description: L.C. Arena</li>
            <li className="tracking-[0.2px]">Latitude: 42.339 Longitude: -83.0485 Description: Comerica Park</li>
          </ol>
        </div>
      </div>
    </div>
  );
}
